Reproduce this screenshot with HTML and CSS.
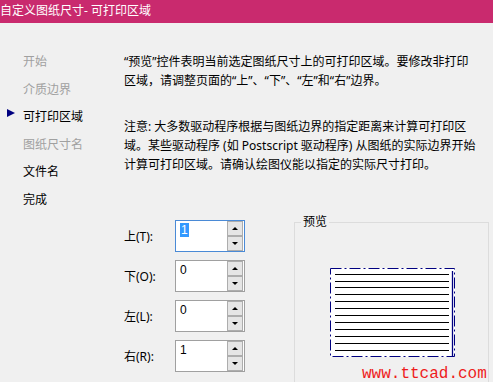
FILE: index.html
```html
<!DOCTYPE html>
<html>
  <head>
    <meta http-equiv="Content-Type" content="text/html; charset=utf-8" />
    <title>自定义图纸尺寸 - 可打印区域</title>
    <link rel="stylesheet" href="styles.css">
  </head>

  <body>
    <div class="window">
      <div class="titlebar">自定义图纸尺寸- 可打印区域</div>
      <div class="main">
        <ul class="steps">
          <li class="off">开始</li>
          <li class="off">介质边界</li>
          <li class="current">可打印区域</li>
          <li class="off">图纸尺寸名</li>
          <li>文件名</li>
          <li>完成</li>
        </ul>
        <div class="content">
          <p class="intro">“预览”控件表明当前选定图纸尺寸上的可打印区域。要修改非打印<br />区域，请调整页面的“上”、“下”、“左”和“右”边界。</p>
          <p class="note">注意: 大多数驱动程序根据与图纸边界的指定距离来计算可打印区<br />域。某些驱动程序 (如 Postscript 驱动程序) 从图纸的实际边界开始<br />计算可打印区域。请确认绘图仪能以指定的实际尺寸打印。</p>
          <div class="lower">
            <div class="margins">
              <div class="row">
                <label>上(T):</label>
                <div class="spin focus">
                  <span class="value"><span class="sel">1</span></span>
                  <div class="btns"><span class="up"></span><span class="down"></span></div>
                </div>
              </div>
              <div class="row">
                <label>下(O):</label>
                <div class="spin">
                  <span class="value">0</span>
                  <div class="btns"><span class="up"></span><span class="down"></span></div>
                </div>
              </div>
              <div class="row">
                <label>左(L):</label>
                <div class="spin">
                  <span class="value">0</span>
                  <div class="btns"><span class="up"></span><span class="down"></span></div>
                </div>
              </div>
              <div class="row">
                <label>右(R):</label>
                <div class="spin">
                  <span class="value">1</span>
                  <div class="btns"><span class="up"></span><span class="down"></span></div>
                </div>
              </div>
            </div>
            <fieldset class="preview">
              <legend>预览</legend>
              <svg class="paper" width="125" height="89" viewBox="0 0 125 89">
                <rect x="0" y="0" width="125" height="89" fill="#fff" />
                <rect x="0.5" y="0.5" width="124" height="88" fill="none" stroke="#000080" stroke-width="1" stroke-dasharray="11 3 2 3" />
                <g stroke="#000" stroke-width="1.2">
                  <line x1="5" y1="6.5" x2="119" y2="6.5" />
                  <line x1="5" y1="13.5" x2="119" y2="13.5" />
                  <line x1="5" y1="19.5" x2="119" y2="19.5" />
                  <line x1="5" y1="26.5" x2="119" y2="26.5" />
                  <line x1="5" y1="33.5" x2="119" y2="33.5" />
                  <line x1="5" y1="40.5" x2="119" y2="40.5" />
                  <line x1="5" y1="47.5" x2="119" y2="47.5" />
                  <line x1="5" y1="54.5" x2="119" y2="54.5" />
                  <line x1="5" y1="61.5" x2="119" y2="61.5" />
                  <line x1="5" y1="68.5" x2="119" y2="68.5" />
                  <line x1="5" y1="75.5" x2="119" y2="75.5" />
                  <line x1="5" y1="82.5" x2="119" y2="82.5" />
                </g>
                <line x1="122.5" y1="3" x2="122.5" y2="88" stroke="#000080" stroke-width="1.3" />
              </svg>
            </fieldset>
          </div>
        </div>
      </div>
      <div class="watermark">www.ttcad.com</div>
    </div>
  </body>
</html>
```

FILE: styles.css
```css
* {
  margin: 0;
  padding: 0;
}
li {
  list-style: none;
}
body {
  background-color: #f0f0f0;
  font: 12px "Noto Sans", "Noto Sans CJK SC", sans-serif;
  color: #000;
}
.window {
  position: relative;
  width: 493px;
  height: 382px;
  overflow: hidden;
}
.titlebar {
  height: 23px;
  line-height: 22px;
  background-color: #c92a6e;
  color: #fff;
  font-size: 12px;
  white-space: nowrap;
}
.main {
  display: flex;
}
.steps {
  width: 124px;
  padding-top: 25px;
}
.steps li {
  position: relative;
  height: 27.6px;
  line-height: 27.6px;
  padding-left: 23px;
}
.steps .off {
  color: #a0a0a0;
}
/* 当前步骤的小三角 */
.steps .current::before {
  content: "";
  position: absolute;
  left: 7px;
  top: 6px;
  border-left: 8px solid #000080;
  border-top: 4px solid transparent;
  border-bottom: 4px solid transparent;
}
.content {
  flex: 1;
}
.content p {
  line-height: 19px;
  white-space: nowrap;
}
.intro {
  margin-top: 29px;
}
.note {
  margin-top: 27px;
}
.lower {
  display: flex;
  margin-top: 41px;
}
.margins {
  width: 170px;
  padding-top: 5px;
}
.row {
  display: flex;
  align-items: center;
  height: 32px;
  margin-bottom: 8px;
}
.row label {
  width: 51px;
}
.spin {
  display: flex;
  width: 70px;
  height: 32px;
  box-sizing: border-box;
  border: 1px solid #a0a0a0;
  background-color: #fff;
}
.spin.focus {
  border-color: #4a8ad6;
}
.value {
  flex: 1;
  padding: 2px 0 0 4px;
  font: 12px/15px "Liberation Sans", sans-serif;
}
.sel {
  background-color: #3399ff;
  color: #fff;
  padding: 0 1px;
}
.btns {
  display: flex;
  flex-direction: column;
  width: 16px;
  margin-right: 1px;
}
.btns span {
  flex: 1;
  display: flex;
  align-items: center;
  justify-content: center;
  border: 1px solid #adadad;
  background-color: #e5e5e5;
}
.btns span::after {
  content: "";
  border-left: 3px solid transparent;
  border-right: 3px solid transparent;
}
.btns .up::after {
  border-bottom: 3px solid #000;
}
.btns .down::after {
  border-top: 3px solid #000;
}
.preview {
  width: 193px;
  height: 200px;
  border: 1px solid #dcdcdc;
}
.preview legend {
  margin-left: 6px;
  padding: 0 2px;
  line-height: 14px;
}
.paper {
  display: block;
  margin: 39px 0 0 35px;
}
.watermark {
  position: absolute;
  left: 362px;
  top: 365px;
  font: 16px/18px "Liberation Mono", monospace;
  color: #ee1c1c;
}
```
